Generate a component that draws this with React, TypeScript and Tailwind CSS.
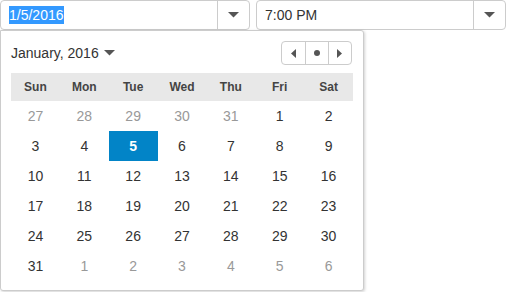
import React from "react";

const days = ["Sun", "Mon", "Tue", "Wed", "Thu", "Fri", "Sat"];
const weeks: { d: number; other?: boolean; sel?: boolean }[][] = [
  [{ d: 27, other: true }, { d: 28, other: true }, { d: 29, other: true }, { d: 30, other: true }, { d: 31, other: true }, { d: 1 }, { d: 2 }],
  [{ d: 3 }, { d: 4 }, { d: 5, sel: true }, { d: 6 }, { d: 7 }, { d: 8 }, { d: 9 }],
  [{ d: 10 }, { d: 11 }, { d: 12 }, { d: 13 }, { d: 14 }, { d: 15 }, { d: 16 }],
  [{ d: 17 }, { d: 18 }, { d: 19 }, { d: 20 }, { d: 21 }, { d: 22 }, { d: 23 }],
  [{ d: 24 }, { d: 25 }, { d: 26 }, { d: 27 }, { d: 28 }, { d: 29 }, { d: 30 }],
  [{ d: 31 }, { d: 1, other: true }, { d: 2, other: true }, { d: 3, other: true }, { d: 4, other: true }, { d: 5, other: true }, { d: 6, other: true }],
];

function Caret() {
  return (
    <svg width="11" height="6" viewBox="0 0 11 6">
      <path d="M0 0 H11 L5.5 5.5 Z" fill="#555" />
    </svg>
  );
}

function Input({ children }: { children: React.ReactNode }) {
  return (
    <div className="flex h-[30px] w-[250px] rounded-[4px] border border-[#cccccc] bg-white">
      <div className="flex flex-1 items-center pl-[8px] text-[14px] text-[#333]">{children}</div>
      <div className="flex w-[32px] items-center justify-center border-l border-[#cccccc]">
        <Caret />
      </div>
    </div>
  );
}

export default function App() {
  return (
    <div
      className="relative h-[292px] w-[506px] bg-white"
      style={{ fontFamily: '"Liberation Sans", Arial, sans-serif' }}
    >
      <div className="flex gap-[6px]">
        <Input>
          <span className="bg-[#3399ff] text-white leading-[18px]">1/5/2016</span>
        </Input>
        <Input>
          <span>7:00 PM</span>
        </Input>
      </div>
      <div className="absolute left-0 top-[30px] w-[364px] h-[261px] rounded-b-[3px] rounded-tr-[3px] border border-[#cccccc] bg-white px-[10px] pt-[10px] shadow-[1px_1px_3px_rgba(0,0,0,0.18)]">
        <div className="flex h-[24px] items-center justify-between">
          <div className="flex items-center gap-[5px] text-[14px] text-[#333]">
            <span>January, 2016</span>
            <Caret />
          </div>
          <div className="mr-[1px] flex h-[24px] w-[71px] rounded-[4px] border border-[#cccccc]">
            <div className="flex flex-1 items-center justify-center">
              <svg width="5" height="9" viewBox="0 0 5 9">
                <path d="M5 0 V9 L0 4.5 Z" fill="#555" />
              </svg>
            </div>
            <div className="flex w-[24px] items-center justify-center border-x border-[#cccccc]">
              <span className="h-[6px] w-[6px] rounded-full bg-[#555]" />
            </div>
            <div className="flex flex-1 items-center justify-center">
              <svg width="5" height="9" viewBox="0 0 5 9">
                <path d="M0 0 V9 L5 4.5 Z" fill="#555" />
              </svg>
            </div>
          </div>
        </div>
        <div className="mt-[8px] w-[342px]">
          <div className="grid h-[28px] grid-cols-7 items-center bg-[#e8e8e8]">
            {days.map((d) => (
              <div key={d} className="text-center text-[12px] font-bold text-[#444]">
                {d}
              </div>
            ))}
          </div>
          {weeks.map((w, i) => (
            <div key={i} className="grid h-[30px] grid-cols-7">
              {w.map((c, j) => (
                <div
                  key={j}
                  className={
                    c.sel
                      ? "flex items-center justify-center bg-[#0284c7] text-[14px] font-bold text-white"
                      : c.other
                      ? "flex items-center justify-center text-[14px] text-[#999]"
                      : "flex items-center justify-center text-[14px] text-[#333]"
                  }
                >
                  {c.d}
                </div>
              ))}
            </div>
          ))}
        </div>
      </div>
    </div>
  );
}
